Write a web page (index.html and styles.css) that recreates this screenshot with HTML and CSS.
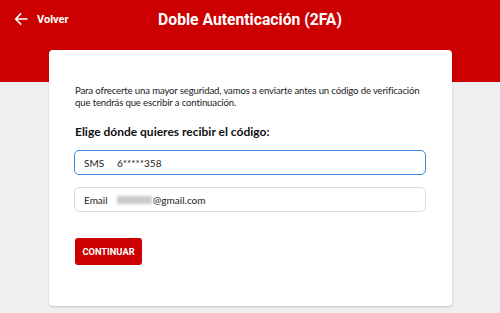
FILE: index.html
```html
<!DOCTYPE html>
<html lang="es">
<head>
<meta charset="utf-8">
<link rel="stylesheet" href="styles.css">
</head>
<body>
<header class="topbar">
  <a class="back">
    <svg class="back-icon" width="14" height="14" viewBox="0 0 14 14"><path d="M13.5 7H1.8M7.2 1.4L1.6 7L7.2 12.6" fill="none" stroke="#fff" stroke-width="1.5"/></svg>
    <span>Volver</span>
  </a>
  <h1 class="title">Doble Autenticación (2FA)</h1>
</header>
<main class="page">
  <section class="card">
    <p class="intro">Para ofrecerte una mayor seguridad, vamos a enviarte antes un código de verificación que tendrás que escribir a continuación.</p>
    <h2 class="subtitle">Elige dónde quieres recibir el código:</h2>
    <div class="option option-active"><span class="label">SMS</span><span class="value">6*****358</span></div>
    <div class="option"><span class="label">Email</span><span class="value"><span class="blur"></span>@gmail.com</span></div>
    <button class="btn">CONTINUAR</button>
  </section>
</main>
</body>
</html>
```
FILE: styles.css
```css
html, body { margin: 0; padding: 0; }
body {
  background: #efefef;
  font-family: Lato, "Open Sans", sans-serif;
  width: 500px;
  height: 313px;
  overflow: hidden;
}
.topbar {
  background: #cc0000;
  height: 82px;
  position: relative;
  display: flex;
  align-items: flex-start;
  justify-content: center;
}
.back {
  position: absolute;
  left: 14px;
  top: 12px;
  display: flex;
  align-items: center;
  gap: 9px;
  color: #fff;
  font-family: Roboto, sans-serif;
  font-weight: 700;
  font-size: 11px;
}
.title {
  margin: 9px 0 0;
  color: #fff;
  font-family: Roboto, sans-serif;
  font-weight: 700;
  font-size: 15.7px;
  line-height: 22px;
}
.page {
  margin-top: -32px;
  display: flex;
  justify-content: center;
  position: relative;
  z-index: 1;
}
.card {
  width: 403px;
  box-sizing: border-box;
  background: #fff;
  border-radius: 4px;
  box-shadow: 0 1px 2px rgba(0,0,0,0.2);
  padding: 35px 26px 41px 26px;
  margin-left: 1px;
}
.intro {
  margin: 0;
  font-size: 9.6px;
  letter-spacing: -0.15px;
  line-height: 12px;
  color: #222;
}
.subtitle {
  margin: 15px 0 11px;
  font-size: 12px;
  font-weight: 700;
  color: #111;
  line-height: 15px;
}
.option {
  margin-left: -1px;
  height: 25px;
  box-sizing: border-box;
  border: 1px solid #dcdcdc;
  border-radius: 5px;
  display: flex;
  align-items: center;
  padding-left: 9px;
  font-size: 10px;
  color: #222;
  margin-bottom: 12px;
}
.option-active {
  border: 1.5px solid #3b84e0;
}
.label { width: 33px; }
.value { display: flex; align-items: center; }
.blur {
  display: inline-block;
  width: 35px;
  height: 8px;
  background: #c9c9c9;
  filter: blur(1.5px);
  margin-right: 1px;
}
.btn {
  margin-top: 14px;
  background: #cc0000;
  border: none;
  border-radius: 3px;
  color: #fff;
  font-family: Roboto, sans-serif;
  font-weight: 700;
  font-size: 9.3px;
  width: 67px;
  height: 27px;
  padding: 0;
}
```
